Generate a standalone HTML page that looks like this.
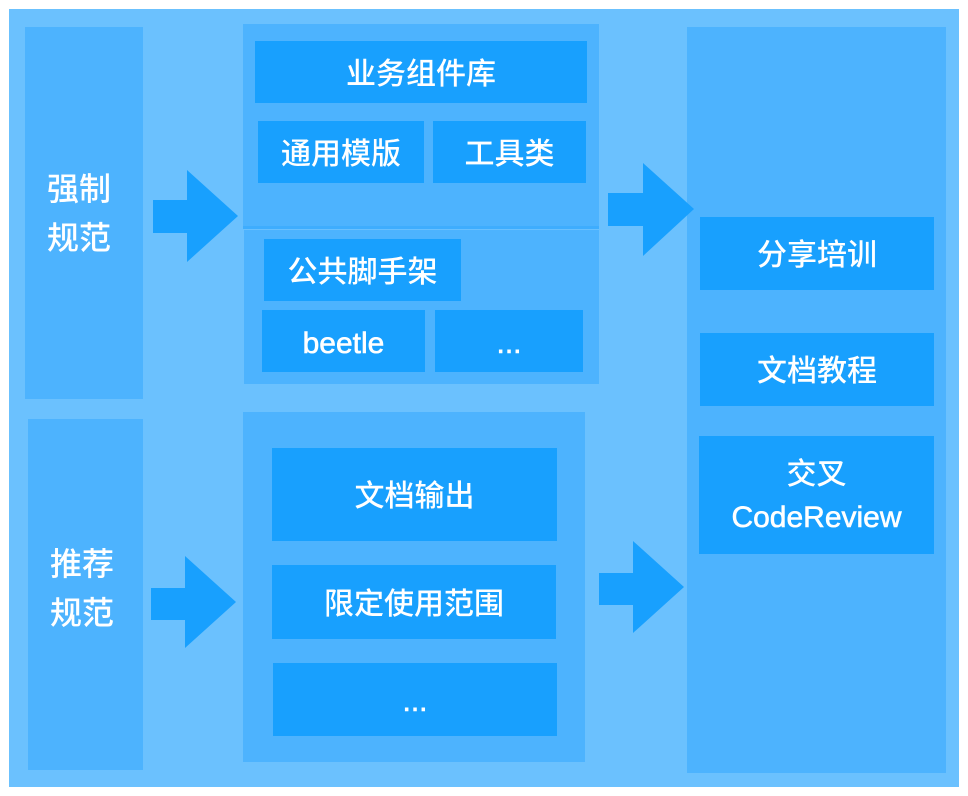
<!DOCTYPE html><html><head><meta charset="utf-8"><style>
body{margin:0;width:968px;height:796px;background:#fff;position:relative;overflow:hidden;font-family:"Liberation Sans","Noto Sans CJK SC",sans-serif;}
div{position:absolute;box-sizing:border-box;}
.p{background:#4db3fe}
.b{background:#18a0fe;color:#fff;font-size:30px;display:flex;align-items:center;justify-content:center;text-align:center;line-height:1.4;padding-top:5px;font-weight:500}
.l{font-size:30px;-webkit-text-stroke:0.6px #fff}
.t{color:#fff;font-size:32px;line-height:49px;text-align:center;font-weight:500}
</style></head><body>
<div style="left:9px;top:9px;width:950px;height:778px;background:#6bc1fe"></div>
<div class="p" style="left:25px;top:27px;width:118px;height:372px"></div>
<div class="t" style="left:22px;top:165px;width:114px">强制<br>规范</div>
<div class="p" style="left:28px;top:419px;width:115px;height:351px"></div>
<div class="t" style="left:25px;top:540px;width:114px">推荐<br>规范</div>
<div class="p" style="left:243px;top:24px;width:356px;height:205px"></div>
<div style="left:243px;top:226px;width:356px;height:3px;background:#3eadfe"></div>
<div class="p" style="left:244px;top:230px;width:355px;height:154px"></div>
<div class="b" style="left:255px;top:41px;width:332px;height:62px">业务组件库</div>
<div class="b" style="left:258px;top:121px;width:166px;height:62px">通用模版</div>
<div class="b" style="left:433px;top:121px;width:153px;height:62px">工具类</div>
<div class="b" style="left:264px;top:239px;width:197px;height:62px">公共脚手架</div>
<div class="b l" style="left:262px;top:310px;width:163px;height:62px">beetle</div>
<div class="b l" style="left:435px;top:310px;width:148px;height:62px">...</div>
<div class="p" style="left:243px;top:412px;width:342px;height:350px"></div>
<div class="b" style="left:272px;top:448px;width:285px;height:93px">文档输出</div>
<div class="b" style="left:272px;top:565px;width:284px;height:74px">限定使用范围</div>
<div class="b l" style="left:273px;top:663px;width:284px;height:73px">...</div>
<div class="p" style="left:687px;top:27px;width:259px;height:746px"></div>
<div class="b" style="left:700px;top:217px;width:234px;height:73px">分享培训</div>
<div class="b" style="left:700px;top:333px;width:234px;height:73px">文档教程</div>
<div class="b" style="left:699px;top:436px;width:235px;height:118px;padding-top:2px"><span style="position:static;display:block;line-height:43px">交叉<br><span class="l">CodeReview</span></span></div>
<svg style="position:absolute;left:0;top:0" width="968" height="796">
<g fill="#18a0fe">
<polygon points="153,200 187,200 187,170 238,216 187,262 187,233 153,233"/>
<polygon points="608,193 643,193 643,163 694,209 643,256 643,226 608,226"/>
<polygon points="151,588 185,588 185,556 236,602 185,648 185,620 151,620"/>
<polygon points="599,573 633,573 633,541 684,587 633,633 633,605 599,605"/>
</g></svg>
</body></html>
